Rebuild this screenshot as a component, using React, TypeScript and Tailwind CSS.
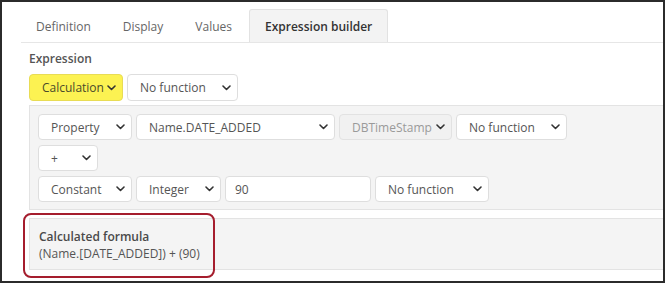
import React from "react";

const Chevron = () => (
  <svg width="9" height="6" viewBox="0 0 9 6" className="shrink-0">
    <path d="M1 1l3.5 3.5L8 1" fill="none" stroke="#333" strokeWidth="1.6" strokeLinecap="round" strokeLinejoin="round" />
  </svg>
);

function Sel({ label, w, variant = "normal" }: { label: string; w: string; variant?: "normal" | "yellow" | "disabled" }) {
  const base = "h-full flex items-center justify-between pl-3 pr-[6px] rounded-[4px] border shrink-0";
  const cls =
    variant === "yellow"
      ? "bg-[#fcf252] border-[#e8dc55] text-[#4a4a2a]"
      : variant === "disabled"
      ? "bg-[#f1f1f1] border-[#e2e2e2] text-[#9a9a9a]"
      : "bg-white border-[#dedede] text-[#555]";
  return (
    <div className={`${base} ${cls} ${w}`}>
      <span className="whitespace-nowrap">{label}</span>
      <Chevron />
    </div>
  );
}

export default function App() {
  return (
    <div
      className="relative w-[665px] h-[283px] border-2 border-[#2b2b2b] bg-white overflow-hidden text-[12px] leading-[17px]"
      style={{ fontFamily: '"Open Sans", "Noto Sans", sans-serif' }}
    >
      {/* tabs */}
      <div className="ml-[19px] mt-[8px] flex items-end border-b border-[#e6e6e6] h-[33px]">
        <div className="px-[15px] h-[32px] flex items-center text-[#666] mr-[2px]">Definition</div>
        <div className="px-[15px] h-[32px] flex items-center text-[#666] mr-[2px]">Display</div>
        <div className="px-[15px] h-[32px] flex items-center text-[#666] mr-[2px]">Values</div>
        <div className="px-[15px] h-[33px] flex items-center text-[#333] font-semibold bg-[#f3f3f3] border border-b-0 border-[#e2e2e2] rounded-t-[3px]">
          Expression builder
        </div>
      </div>

      <div className="ml-[27px]">
        <div className="pt-[7px] font-semibold text-[#555]">Expression</div>
        <div className="mt-[7px] flex gap-[4px] h-[27px]">
          <Sel label="Calculation" w="w-[94px]" variant="yellow" />
          <Sel label="No function" w="w-[111px]" />
        </div>

        {/* builder panel */}
        <div className="mt-[4px] bg-[#f4f4f4] border border-r-0 border-[#e3e3e3] pl-[8px] pt-[8px] pb-[7px] flex flex-col gap-[5px]">
          <div className="flex gap-[4px] h-[26px]">
            <Sel label="Property" w="w-[94px]" />
            <Sel label="Name.DATE_ADDED" w="w-[199px]" />
            <Sel label="DBTimeStamp" w="w-[113px]" variant="disabled" />
            <Sel label="No function" w="w-[111px]" />
          </div>
          <div className="flex gap-[4px] h-[26px]">
            <Sel label="+" w="w-[60px]" />
          </div>
          <div className="flex gap-[4px] h-[26px]">
            <Sel label="Constant" w="w-[94px]" />
            <Sel label="Integer" w="w-[85px]" />
            <div className="h-full w-[146px] flex items-center pl-[9px] bg-white border border-[#dedede] rounded-[4px] text-[#555]">90</div>
            <Sel label="No function" w="w-[114px]" />
          </div>
        </div>

        {/* formula panel */}
        <div className="mt-[8px] bg-[#f4f4f4] border border-r-0 border-[#e3e3e3] pl-[9px] pt-[9px] pb-[7px] text-[#555]">
          <div className="font-semibold text-[#4a4a4a]">Calculated formula</div>
          <div>(Name.[DATE_ADDED]) + (90)</div>
        </div>
      </div>

      <div className="absolute left-[21px] top-[211px] w-[192px] h-[65px] border-2 border-[#a51d2d] rounded-[8px]" />
    </div>
  );
}
